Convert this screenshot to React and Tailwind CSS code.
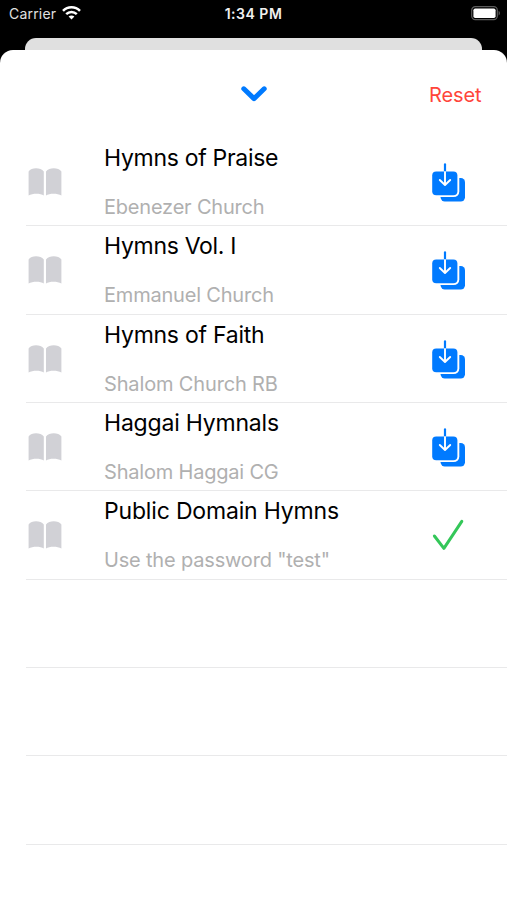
const hymnals = [
  { title: "Hymns of Praise", subtitle: "Ebenezer Church", spacing: "tracking-[-0.3px]", subSpacing: "tracking-[-0.2px]" },
  { title: "Hymns Vol. I", subtitle: "Emmanuel Church", spacing: "tracking-[-0.3px]", subSpacing: "tracking-[-0.2px]" },
  { title: "Hymns of Faith", subtitle: "Shalom Church RB", spacing: "tracking-[-0.25px]", subSpacing: "tracking-[-0.15px]" },
  { title: "Haggai Hymnals", subtitle: "Shalom Haggai CG", spacing: "tracking-[-0.2px]", subSpacing: "tracking-[-0.2px]" },
  { title: "Public Domain Hymns", subtitle: 'Use the password "test"', spacing: "tracking-[-0.17px]", subSpacing: "tracking-[-0.18px]", downloaded: true },
];

const emptyRows = [0, 1, 2];

function WifiIcon() {
  return (
    <svg width="19" height="14" viewBox="0 0 19 14" fill="none" stroke="#fff" strokeWidth="2.5">
      <path d="M1 4.9C5.7.1 13.3.1 18 4.9" />
      <path d="M4.2 8.2C7.2 5.3 11.8 5.3 14.8 8.2" />
      <path d="M6.6 10.6C8.3 9.1 10.7 9.1 12.4 10.6L9.5 13.5Z" fill="#fff" stroke="none" />
    </svg>
  );
}

function BatteryIcon() {
  return (
    <svg width="30" height="15" viewBox="0 0 30 15" fill="none">
      <rect x="0.7" y="0.7" width="25.6" height="13" rx="3.6" stroke="#5c5c5c" strokeWidth="1.2" />
      <rect x="2.4" y="2.4" width="22.2" height="9.6" rx="1.8" fill="#fff" />
      <path d="M27.6 5C29.3 5.6 29.3 8.8 27.6 9.4Z" fill="#5c5c5c" />
    </svg>
  );
}

function BookIcon() {
  return (
    <svg width="34" height="28" viewBox="0 0 34 28" fill="#d1d1d6">
      <path d="M.6 3.6C3.4-.8 12.6-.8 15.8 3.6V27.6C12.4 25 4.6 25 .6 27.6Z" />
      <path d="M18 3.6C21.2-.8 30.4-.8 33.4 3.6V27.6C29.4 25 21.4 25 18 27.6Z" />
    </svg>
  );
}

function DownloadIcon() {
  return (
    <svg width="35" height="40" viewBox="0 0 35 40" fill="none" strokeLinecap="round" strokeLinejoin="round">
      <rect x="9.6" y="15" width="24.4" height="23.4" rx="4.2" fill="#007aff" />
      <rect x="-0.7" y="6.7" width="29" height="27.4" rx="5.6" fill="#fff" />
      <rect x="1.2" y="8.6" width="25.2" height="23.6" rx="4" fill="#007aff" />
      <path d="M14 1.4V8.6" stroke="#007aff" strokeWidth="2.2" />
      <path d="M14 9V21.8M8.8 17L14 22L19.2 17" stroke="#fff" strokeWidth="1.9" />
    </svg>
  );
}

function CheckIcon() {
  return (
    <svg width="34" height="34" viewBox="0 0 34 34" fill="none">
      <path d="M3.4 17L12.9 29.4L30.8 2.3" stroke="#34c759" strokeWidth="3" strokeLinecap="round" strokeLinejoin="round" />
    </svg>
  );
}

function HymnalRow({ item }) {
  return (
    <li className="flex h-[88.33px] border-b border-[#e9e9ea]">
      <div className="w-[78px] pt-[30px] pl-[2px]">
        <BookIcon />
      </div>
      <div className="flex-1 whitespace-nowrap">
        <div className={`pt-[4px] text-[23px] leading-[32px] text-black ${item.spacing}`}>{item.title}</div>
        <div className={`pt-[19px] text-[20px] leading-[28px] text-[#b0b0b0] ${item.subSpacing}`}>{item.subtitle}</div>
      </div>
      <div className="w-[76px]">
        {item.downloaded ? (
          <div className="pt-[28px]"><CheckIcon /></div>
        ) : (
          <div className="pt-[25px]"><DownloadIcon /></div>
        )}
      </div>
    </li>
  );
}

export default function App() {
  return (
    <div className="flex h-[900px] w-[507px] flex-col overflow-hidden bg-black font-['Inter',sans-serif]">
      <header className="grid h-[38px] grid-cols-3 items-start text-white">
        <div className="flex pt-[5px] pl-[9px]">
          <span className="w-[52.5px] text-[14px] leading-[18px] tracking-[0.2px] text-[#e0e0e0]">Carrier</span>
          <span className="pt-px"><WifiIcon /></span>
        </div>
        <div className="pt-[5px] text-center text-[14px] leading-[18px] font-semibold tracking-[0.5px] text-[#f0f0f0]">1:34 PM</div>
        <div className="flex justify-end pt-[6px] pr-[6px]">
          <BatteryIcon />
        </div>
      </header>

      <div className="mx-[25px] h-[12px] shrink-0 rounded-t-[11px] bg-[#e0e0e0]" />

      <main className="flex-1 rounded-t-[13px] bg-white">
        <div className="grid h-[88px] grid-cols-3 items-center">
          <span />
          <button type="button" aria-label="Close" className="flex justify-center">
            <svg width="28" height="18" viewBox="0 0 28 18" fill="none">
              <path d="M3.8 3.8L14 13.6L24.2 3.8" stroke="#007aff" strokeWidth="5" strokeLinecap="round" strokeLinejoin="round" />
            </svg>
          </button>
          <button type="button" className="pt-px pr-[25.5px] text-right text-[20px] tracking-[-0.1px] text-[#ff453a]">Reset</button>
        </div>

        <ul className="ml-[26px]">
          {hymnals.map((item) => (
            <HymnalRow key={item.title} item={item} />
          ))}
          {emptyRows.map((row) => (
            <li key={row} className="h-[88.33px] border-b border-[#e9e9ea]" />
          ))}
        </ul>
      </main>
    </div>
  );
}
